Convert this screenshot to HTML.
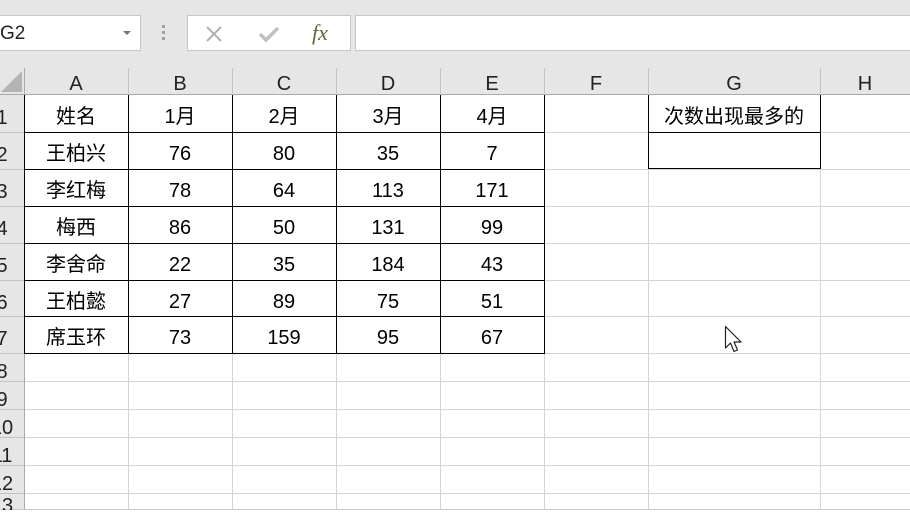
<!DOCTYPE html>
<html><head><meta charset="utf-8"><style>
*{margin:0;padding:0;box-sizing:border-box}
body{width:910px;height:525px;background:#fff;position:relative;overflow:hidden;font-family:"Liberation Sans","Noto Sans CJK SC",sans-serif;color:#000}
.a{position:absolute}
.top{left:0;top:0;width:910px;height:68px;background:#e6e6e6}
.box{background:#fff;border:1px solid #c6c6c6}
.hl{position:absolute;height:1px;background:#d4d4d4}
.vl{position:absolute;width:1px;background:#d4d4d4}
.bh{position:absolute;height:1px;background:#000}
.bv{position:absolute;width:1px;background:#000}
.t{position:absolute;text-align:center;font-size:20px;padding-top:4px}
.ch{position:absolute;top:68px;height:27px;text-align:center;font-size:20px;line-height:33px;color:#222}
.rn{position:absolute;left:-10px;width:24px;text-align:center;font-size:20px;color:#222}
</style></head><body>
<div class="a top"></div>
<div class="a box" style="left:-1px;top:15px;width:142px;height:36px"></div>
<div class="a" style="left:0;top:16px;font-size:19px;line-height:36px;color:#222">G2</div>
<div class="a" style="left:123px;top:31px;width:0;height:0;border-left:4px solid transparent;border-right:4px solid transparent;border-top:4px solid #777"></div>
<div class="a" style="left:162px;top:25px;width:3px;height:3px;background:#a0a0a0;box-shadow:0 6px 0 #a0a0a0,0 12px 0 #a0a0a0"></div>
<div class="a box" style="left:187px;top:15px;width:164px;height:36px"></div>
<svg class="a" style="left:204px;top:24px" width="20" height="20"><path d="M3 3L17 17M17 3L3 17" stroke="#b0b0b0" stroke-width="2"/></svg>
<svg class="a" style="left:257px;top:24px" width="24" height="20"><path d="M3 10L9 16L21 4" stroke="#c0c0c0" stroke-width="3.5" fill="none"/></svg>
<div class="a" style="left:312px;top:18px;font-family:'Liberation Serif',serif;font-style:italic;font-size:22px;color:#5a6a3a;line-height:30px">fx</div>
<div class="a box" style="left:355px;top:15px;width:560px;height:36px"></div>
<div class="a" style="left:0;top:68px;width:910px;height:27px;background:#e6e6e6"></div>
<div class="a" style="left:0;top:95px;width:24px;height:415px;background:#e6e6e6"></div>
<div class="a" style="width:0;height:0;border-left:21px solid transparent;border-bottom:21px solid #b4b4b4;left:1px;top:71px"></div>
<div class="a" style="left:0;top:94px;width:910px;height:1px;background:#aaa"></div>
<div class="a" style="left:24px;top:68px;width:1px;height:442px;background:#aaa"></div>
<div class="a" style="left:0;top:509px;width:910px;height:1px;background:#c8c8c8"></div>
<div id="g"></div>
<script>
var cols=[24,128,232,336,440,544,648,820,910];
var names="ABCDEFGH";
var rows=[95,132,169,206,243,280,316,353,381,409,437,465,493,510];
var h='';
for(var i=0;i<8;i++){h+='<div class="ch" style="left:'+cols[i]+'px;width:'+(cols[i+1]-cols[i])+'px">'+names[i]+'</div>';
 if(i>0)h+='<div class="vl" style="left:'+cols[i]+'px;top:68px;height:27px;background:#c4c4c4"></div>';}
for(var i=1;i<8;i++)h+='<div class="vl" style="left:'+cols[i]+'px;top:95px;height:415px"></div>';
for(var j=1;j<rows.length-1;j++)h+='<div class="hl" style="left:25px;top:'+rows[j]+'px;width:885px"></div><div class="hl" style="left:0;top:'+rows[j]+'px;width:24px;background:#c4c4c4"></div>';
for(var j=0;j<13;j++){var t=rows[j],hh=rows[j+1]-t;h+='<div class="rn" style="top:'+(t+2)+'px;height:'+(hh-2)+'px;line-height:'+(hh+6)+'px;overflow:hidden">'+(j+1)+'</div>';}
var d=[["姓名","1月","2月","3月","4月"],["王柏兴","76","80","35","7"],["李红梅","78","64","113","171"],["梅西","86","50","131","99"],["李舍命","22","35","184","43"],["王柏懿","27","89","75","51"],["席玉环","73","159","95","67"]];
for(var j=0;j<7;j++)for(var i=0;i<5;i++)h+='<div class="t" style="left:'+cols[i]+'px;width:104px;top:'+rows[j]+'px;height:'+(rows[j+1]-rows[j])+'px;line-height:'+(rows[j+1]-rows[j])+'px">'+d[j][i]+'</div>';
for(var i=0;i<6;i++)h+='<div class="bv" style="left:'+cols[i]+'px;top:95px;height:259px"></div>';
for(var j=1;j<8;j++)h+='<div class="bh" style="left:24px;top:'+rows[j]+'px;width:521px"></div>';
h+='<div class="t" style="left:648px;width:172px;top:95px;height:37px;line-height:37px">次数出现最多的</div>';
h+='<div class="bv" style="left:648px;top:95px;height:74px"></div><div class="bv" style="left:820px;top:95px;height:74px"></div>';
h+='<div class="bh" style="left:648px;top:132px;width:173px"></div><div class="bh" style="left:648px;top:168px;width:173px"></div>';
document.getElementById('g').innerHTML=h;
</script>
<svg class="a" style="left:724px;top:325px" width="20" height="30"><path d="M1.5 1.5L1.5 23L6.5 18L10 26.5L13.5 25L10 17L17 17Z" fill="#fff" stroke="#222" stroke-width="1.2" stroke-linejoin="round"/></svg>
</body></html>
